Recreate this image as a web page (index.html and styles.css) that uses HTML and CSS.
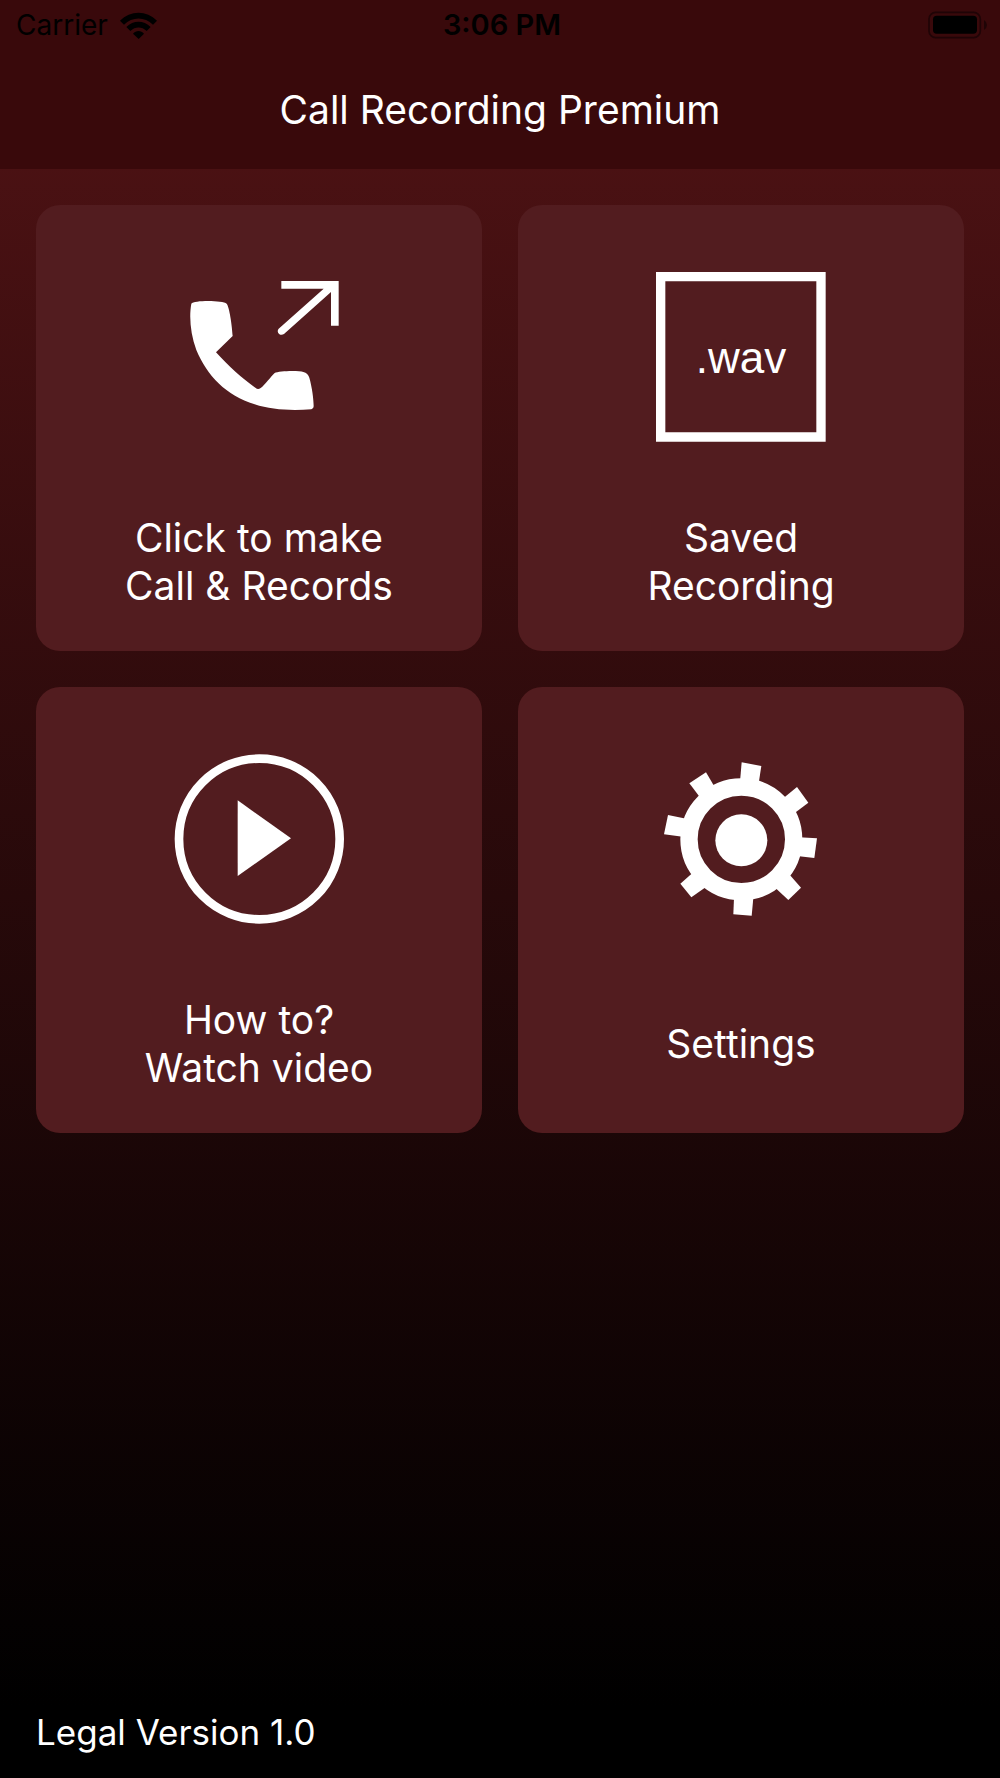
FILE: index.html
```html
<!DOCTYPE html>
<html lang="en">
<head>
  <meta charset="utf-8">
  <meta name="viewport" content="width=device-width, initial-scale=1">
  <title>Call Recording Premium</title>
  <link rel="stylesheet" href="styles.css">
</head>
<body>
  <header class="header">
    <div class="status">
      <div class="status-carrier">
        <span>Carrier</span>
        <svg class="wifi" viewBox="360 30 111 81" aria-hidden="true">
          <path d="M360 56C391 24 440 24 471 56L459 68C434 43 397 43 372 68Z"/>
          <path d="M379 75C400 54 431 54 452 75L440 87C425 73 406 73 391 87Z"/>
          <path d="M399 95C408 84 423 84 432 95L416 111Z"/>
        </svg>
      </div>
      <time class="status-time">3:06 PM</time>
      <svg class="battery" viewBox="1284 31 180 84" aria-hidden="true">
        <rect class="battery-shell" x="1287" y="35" width="154" height="76" rx="20"/>
        <path class="battery-tip" d="M1452 58Q1461 64 1461 73Q1461 82 1452 88Z"/>
        <rect x="1299" y="45" width="132" height="54" rx="11"/>
      </svg>
    </div>
    <h1 class="title">Call Recording Premium</h1>
  </header>

  <main class="grid">
    <button class="card" type="button">
      <svg class="icon" viewBox="12 36 510 510" aria-hidden="true">
        <path d="M64 131C72 120 159 121 170 131C178 140 186 195 188 228L138 277C178 321 214 353 257 384Q264 390 272 384C285 375 303 349 314 339C326 332 388 331 400 336Q414 340 418 353C426 381 431 417 431 439Q431 447 424 448C365 452 303 450 254 433C169 407 111 347 79 270C61 222 57 169 64 131Z"/>
        <path d="M334 63H506V197H483V96L342 222C329 230 318 215 326 206L461 86H334Z"/>
      </svg>
      <span class="label">Click to make<br>Call &amp; Records</span>
    </button>
    <button class="card" type="button">
      <svg class="icon" viewBox="48 36 510 510" aria-hidden="true">
        <path fill-rule="evenodd" d="M48 36H557V545H48ZM76 64V517H529V64Z"/>
        <text class="icon-text" x="303" y="338">.wav</text>
      </svg>
      <span class="label">Saved<br>Recording</span>
    </button>
    <button class="card" type="button">
      <svg class="icon" viewBox="42 42 510 510" aria-hidden="true">
        <circle class="ring" cx="298" cy="297" r="241"/>
        <path d="M233 181L393 295L233 408Z"/>
      </svg>
      <span class="label">How to?<br>Watch video</span>
    </button>
    <button class="card" type="button">
      <svg class="icon" viewBox="48 42 510 510" aria-hidden="true">
        <circle class="gear-ring" cx="304" cy="298" r="157"/>
        <circle cx="304" cy="301" r="78"/>
        <path d="M305 67L364 78L356 130L300 125Z"/>
        <path d="M471 141L505 188L460 222L428 176Z"/>
        <path d="M477 292L531 295L523 354L471 348Z"/>
        <path d="M447 402L483 443L445 480L404 442Z"/>
        <path d="M282 473L340 473L335 527L280 523Z"/>
        <path d="M160 397L199 440L154 472L121 431Z"/>
        <path d="M139 236L84 225L72 283L128 290Z"/>
        <path d="M224 141L198 97L148 130L182 175Z"/>
      </svg>
      <span class="label">Settings</span>
    </button>
  </main>

  <footer class="footer">Legal Version 1.0</footer>
</body>
</html>
```
FILE: styles.css
```css
* {
  box-sizing: border-box;
}

body {
  display: flex;
  flex-direction: column;
  min-height: 100vh;
  margin: 0;
  background: linear-gradient(#521315, #000 96%);
  color: #fff;
  font-family: Inter, "Liberation Sans", sans-serif;
}

.header {
  padding-bottom: 35px;
  background: #39090b;
}

.status {
  display: grid;
  grid-template-columns: 1fr auto 1fr;
  align-items: center;
  height: 50px;
  padding: 0 12px 0 16px;
  color: #000;
  fill: #000;
  font-size: 28px;
  line-height: 34px;
}

.status-carrier {
  display: flex;
  align-items: center;
  gap: 12px;
}

.status-time {
  font-size: 29px;
  font-weight: 600;
}

.wifi {
  width: 37px;
  height: 27px;
}

.battery {
  width: 60px;
  height: 28px;
  justify-self: end;
}

.battery-shell {
  fill: none;
  stroke: #1f0406;
  stroke-width: 5;
}

.battery-tip {
  fill: #1f0406;
}

.title {
  margin: 36px 0 0;
  font-size: 39px;
  font-weight: 400;
  line-height: 48px;
  text-align: center;
}

.grid {
  display: grid;
  grid-template-columns: 1fr 1fr;
  gap: 36px;
  padding: 36px;
}

.card {
  display: flex;
  flex-direction: column;
  align-items: center;
  justify-content: space-between;
  aspect-ratio: 1;
  padding: 67px 24px 41px;
  border: 0;
  border-radius: 24px;
  background: #521c1f;
  color: inherit;
  font: inherit;
  cursor: pointer;
}

.icon {
  width: 170px;
  height: 170px;
  fill: #fff;
}

.icon-text {
  font-family: "Liberation Sans", Arial, sans-serif;
  font-size: 132px;
  text-anchor: middle;
}

.ring,
.gear-ring {
  fill: none;
  stroke: #fff;
  stroke-width: 26;
}

.gear-ring {
  stroke-width: 52;
}

.label {
  display: flex;
  flex-direction: column;
  justify-content: center;
  min-height: 96px;
  font-size: 39px;
  line-height: 48px;
  text-align: center;
}

.footer {
  margin-top: auto;
  padding: 0 36px 24px;
  font-size: 35px;
  line-height: 44px;
}
```
